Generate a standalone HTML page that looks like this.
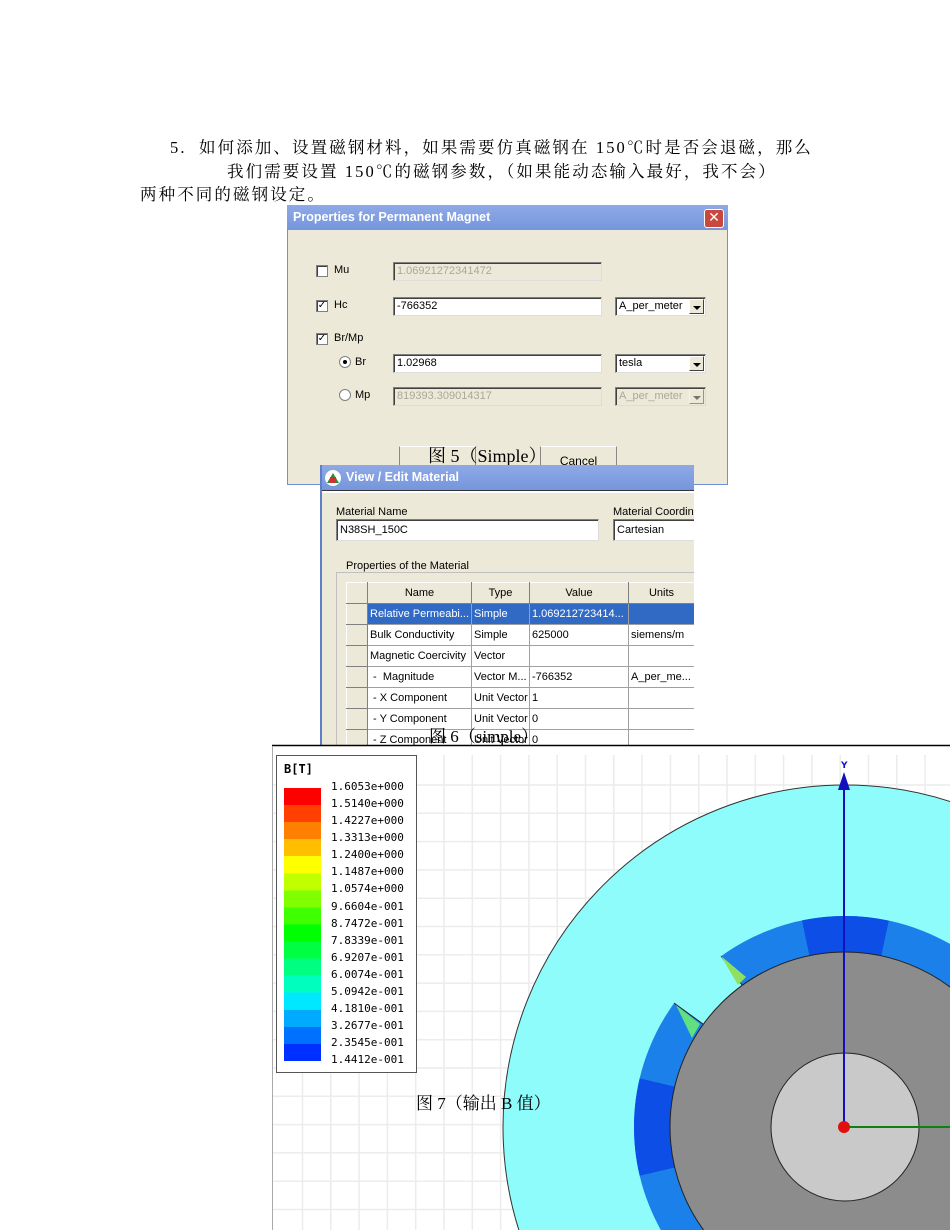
<!DOCTYPE html>
<html style="overflow:hidden"><head><meta charset="utf-8"><style>
*{margin:0;padding:0;box-sizing:border-box}
html,body{width:950px;height:1230px;overflow:hidden}
body{background:#fff;position:relative;font-family:"Liberation Serif","Noto Serif CJK SC",serif}
.a{position:absolute}
.t{font-size:16.5px;color:#000;white-space:nowrap;letter-spacing:2.1px}
.ui{font-family:"Liberation Sans","DejaVu Sans",sans-serif;font-size:11px;color:#000;white-space:nowrap}
.inp{position:absolute;background:#fff;border:1px solid #7f7f7f;border-right-color:#ddd;border-bottom-color:#ddd;box-shadow:inset 1px 1px 0 #404040;font-family:"Liberation Sans",sans-serif;font-size:11px;padding:2px 3px;line-height:13px;white-space:nowrap;overflow:hidden}
.dis{background:#ece9d8;color:#aca899}
.cb{position:absolute;width:12px;height:12px;background:#fff;border:1px solid #808080;box-shadow:inset 1px 1px 0 #404040;font-size:10px;line-height:10px;text-align:center;font-family:"DejaVu Sans",sans-serif;font-weight:bold}
.rd{position:absolute;width:12px;height:12px;border-radius:50%;background:#fff;border:1px solid #808080}
.dd{position:absolute;right:1px;top:1px;width:15px;bottom:1px;background:#ece9d8;border:1px solid #fff;border-right-color:#404040;border-bottom-color:#404040}
.dd:after{content:"";position:absolute;left:3px;top:6px;border-left:4px solid transparent;border-right:4px solid transparent;border-top:4px solid #000}
.tb{position:absolute;left:0;right:0;top:0;height:25px;background:linear-gradient(#8fa9e6,#7596dc);color:#fff;font-family:"Liberation Sans",sans-serif;font-weight:bold;font-size:12.5px;line-height:25px;padding-left:6px}
table{border-collapse:collapse;position:absolute;table-layout:fixed}
td{border:1px solid #a0a0a0;height:21px;font-family:"Liberation Sans",sans-serif;font-size:11px;padding:0 2px;white-space:nowrap;overflow:hidden;background:#fff}
td.h{background:#ece9d8;text-align:center;border-color:#fff #808080 #808080 #fff}
td.r{background:#ece9d8;border-color:#fff #808080 #808080 #fff}
.lg{font-family:"DejaVu Sans Mono","Liberation Mono",monospace;font-size:11px;position:absolute;left:331px}
</style></head><body>

<div class="a t" style="left:170px;top:134px">5.&nbsp; 如何添加、设置磁钢材料，如果需要仿真磁钢在 150℃时是否会退磁，那么</div>
<div class="a t" style="left:227px;top:158px">我们需要设置 150℃的磁钢参数，（如果能动态输入最好，我不会）</div>
<div class="a t" style="left:140px;top:181px">两种不同的磁钢设定。</div>

<!-- Dialog 1 -->
<div class="a" style="left:287px;top:205px;width:441px;height:280px;background:#ece9d8;border:1px solid #6f8fd6;border-top:none">
 <div class="tb" style="left:-1px;right:-1px">Properties for Permanent Magnet</div>
 <div class="a" style="right:3px;top:4px;width:20px;height:19px;background:#c9483b;border:1px solid #fff;border-radius:3px;color:#fff;font:bold 14px 'DejaVu Sans';text-align:center;line-height:17px">✕</div>
 <div class="cb" style="left:28px;top:60px"></div><div class="a ui" style="left:46px;top:59px">Mu</div>
 <div class="inp dis" style="left:105px;top:57px;width:209px;height:19px">1.06921272341472</div>
 <div class="cb" style="left:28px;top:95px">✓</div><div class="a ui" style="left:46px;top:94px">Hc</div>
 <div class="inp" style="left:105px;top:92px;width:209px;height:19px">-766352</div>
 <div class="inp" style="left:327px;top:92px;width:91px;height:19px">A_per_meter<div class="dd"></div></div>
 <div class="cb" style="left:28px;top:128px">✓</div><div class="a ui" style="left:46px;top:127px">Br/Mp</div>
 <div class="rd" style="left:51px;top:151px"><div class="a" style="left:3px;top:3px;width:4px;height:4px;background:#000;border-radius:50%"></div></div><div class="a ui" style="left:67px;top:151px">Br</div>
 <div class="inp" style="left:105px;top:149px;width:209px;height:19px">1.02968</div>
 <div class="inp" style="left:327px;top:149px;width:91px;height:19px">tesla<div class="dd"></div></div>
 <div class="rd" style="left:51px;top:184px"></div><div class="a ui" style="left:67px;top:184px">Mp</div>
 <div class="inp dis" style="left:105px;top:182px;width:209px;height:19px">819393.309014317</div>
 <div class="inp dis" style="left:327px;top:182px;width:91px;height:19px">A_per_meter<div class="dd" style="opacity:.5"></div></div>
 <div class="a" style="left:111px;top:241px;width:77px;height:30px;border:1px solid #888;border-top-color:#fff;background:#ece9d8"></div>
 <div class="a" style="left:252px;top:241px;width:77px;height:30px;border:1px solid #888;border-top-color:#fff;background:#ece9d8"><div class="ui" style="text-align:center;margin-top:7px;font-size:12px">Cancel</div></div>
 <div class="a" style="left:188px;top:241px;width:64px;height:30px;background:#ece9d8"></div>
</div>
<div class="a t" style="left:428px;top:442px;font-size:18px;letter-spacing:0">图 5（Simple）</div>

<!-- Dialog 2 -->
<div class="a" style="left:320px;top:465px;width:374px;height:281px;background:#ece9d8;border-left:2px solid #5f7fc6;overflow:hidden">
 <div class="tb" style="padding-left:24px">View / Edit Material</div>
 <div class="a" style="left:3px;top:5px;width:16px;height:16px;border-radius:50%;background:#fff"><div class="a" style="left:2px;top:3px;border-left:6px solid transparent;border-right:6px solid transparent;border-bottom:10px solid #2a8a3a"></div><div class="a" style="left:5px;top:7px;width:6px;height:6px;background:#c33"></div></div>
 <div class="a" style="left:0;top:25px;width:374px;height:3px;background:#fff;border-top:1px solid #333"></div>
 <div class="a ui" style="left:14px;top:41px">Material Name</div>
 <div class="inp" style="left:14px;top:54px;width:263px;height:22px;padding-top:4px">N38SH_150C</div>
 <div class="a ui" style="left:291px;top:41px">Material Coordina</div>
 <div class="inp" style="left:291px;top:54px;width:90px;height:22px;padding-top:4px">Cartesian</div>
 <div class="a" style="left:14px;top:107px;width:380px;height:200px;border:1px solid #c0c0c0;border-right:none"></div>
 <div class="a ui" style="left:22px;top:95px;background:#ece9d8;padding:0 2px">Properties of the Material</div>
 <table style="left:24px;top:117px;width:348px">
  <tr><td class="r" style="width:21px"></td><td class="h" style="width:104px">Name</td><td class="h" style="width:58px">Type</td><td class="h" style="width:99px">Value</td><td class="h" style="width:66px">Units</td></tr>
  <tr><td class="r"></td><td style="background:#316ac5;color:#fff">Relative Permeabi...</td><td style="background:#316ac5;color:#fff">Simple</td><td style="background:#316ac5;color:#fff">1.069212723414...</td><td style="background:#316ac5"></td></tr>
  <tr><td class="r"></td><td>Bulk Conductivity</td><td>Simple</td><td>625000</td><td>siemens/m</td></tr>
  <tr><td class="r"></td><td>Magnetic Coercivity</td><td>Vector</td><td></td><td></td></tr>
  <tr><td class="r"></td><td>&nbsp;-&nbsp; Magnitude</td><td>Vector M...</td><td>-766352</td><td>A_per_me...</td></tr>
  <tr><td class="r"></td><td>&nbsp;- X Component</td><td>Unit Vector</td><td>1</td><td></td></tr>
  <tr><td class="r"></td><td>&nbsp;- Y Component</td><td>Unit Vector</td><td>0</td><td></td></tr>
  <tr><td class="r"></td><td>&nbsp;- Z Component</td><td>Unit Vector</td><td>0</td><td></td></tr>
 </table>
</div>
<div class="a t" style="left:429px;top:722px;font-size:17px;letter-spacing:0">图 6（simple）</div>

<!-- Figure 7 -->
<svg class="a" style="left:0;top:0" width="950" height="1230" viewBox="0 0 950 1230">
 <line x1="272" y1="745.5" x2="950" y2="745.5" stroke="#000" stroke-width="1.5"/>
 <g stroke="#ececec" stroke-width="1.5">
  <line x1="302.5" y1="755" x2="302.5" y2="1230"/><line x1="330.8" y1="755" x2="330.8" y2="1230"/><line x1="359.1" y1="755" x2="359.1" y2="1230"/><line x1="387.4" y1="755" x2="387.4" y2="1230"/><line x1="415.7" y1="755" x2="415.7" y2="1230"/><line x1="444" y1="755" x2="444" y2="1230"/><line x1="472.3" y1="755" x2="472.3" y2="1230"/><line x1="500.6" y1="755" x2="500.6" y2="1230"/><line x1="528.9" y1="755" x2="528.9" y2="1230"/><line x1="557.2" y1="755" x2="557.2" y2="1230"/><line x1="585.5" y1="755" x2="585.5" y2="1230"/><line x1="613.8" y1="755" x2="613.8" y2="1230"/><line x1="642.1" y1="755" x2="642.1" y2="1230"/><line x1="670.4" y1="755" x2="670.4" y2="1230"/><line x1="698.7" y1="755" x2="698.7" y2="1230"/><line x1="727" y1="755" x2="727" y2="1230"/><line x1="755.3" y1="755" x2="755.3" y2="1230"/><line x1="783.6" y1="755" x2="783.6" y2="1230"/><line x1="811.9" y1="755" x2="811.9" y2="1230"/><line x1="840.2" y1="755" x2="840.2" y2="1230"/><line x1="868.5" y1="755" x2="868.5" y2="1230"/><line x1="896.8" y1="755" x2="896.8" y2="1230"/><line x1="925.1" y1="755" x2="925.1" y2="1230"/>
  <line x1="272" y1="785" x2="950" y2="785"/><line x1="272" y1="813.3" x2="950" y2="813.3"/><line x1="272" y1="841.6" x2="950" y2="841.6"/><line x1="272" y1="869.9" x2="950" y2="869.9"/><line x1="272" y1="898.2" x2="950" y2="898.2"/><line x1="272" y1="926.5" x2="950" y2="926.5"/><line x1="272" y1="954.8" x2="950" y2="954.8"/><line x1="272" y1="983.1" x2="950" y2="983.1"/><line x1="272" y1="1011.4" x2="950" y2="1011.4"/><line x1="272" y1="1039.7" x2="950" y2="1039.7"/><line x1="272" y1="1068" x2="950" y2="1068"/><line x1="272" y1="1096.3" x2="950" y2="1096.3"/><line x1="272" y1="1124.6" x2="950" y2="1124.6"/><line x1="272" y1="1152.9" x2="950" y2="1152.9"/><line x1="272" y1="1181.2" x2="950" y2="1181.2"/><line x1="272" y1="1209.5" x2="950" y2="1209.5"/>
 </g>
 <line x1="272.5" y1="746" x2="272.5" y2="1230" stroke="#aaa"/>
 <circle cx="845" cy="1127" r="342" fill="#8ffcfc" stroke="#333" stroke-width="1"/>
 <circle cx="845" cy="1127" r="193" fill="none" stroke="#1c80ea" stroke-width="36"/>
 <circle cx="845" cy="1127" r="193" fill="none" stroke="#0c4ee6" stroke-width="36" stroke-dasharray="80 1132.6" stroke-dashoffset="-869.5"/>
 <circle cx="845" cy="1127" r="193" fill="none" stroke="#0c4ee6" stroke-width="36" stroke-dasharray="90 1122.6" stroke-dashoffset="-561"/>
 <circle cx="845" cy="1127" r="200" fill="none" stroke="#0030e0" stroke-width="16" stroke-dasharray="40 1216" stroke-dashoffset="-1236"/>
 <path d="M845 1127 L710 941 L659 992 Z" fill="#8ffcfc"/>
 <path d="M721 956 L742 985 M674 1003 L703 1024" stroke="#222" stroke-width="1"/>
 <path d="M721 956 L738 985 L746 977 Z" fill="#8fe060"/>
 <path d="M676 1005 L692 1038 L700 1024 Z" fill="#60e080"/>
 <circle cx="845" cy="1127" r="175" fill="#8c8c8c" stroke="#222"/>
 <circle cx="845" cy="1127" r="74" fill="#c9c9c9" stroke="#222"/>
 <line x1="844" y1="1127" x2="844" y2="785" stroke="#1010c0" stroke-width="2"/>
 <path d="M838 790 L844 772 L850 790 Z" fill="#1010c0"/>
 <text x="841" y="768" font-family="DejaVu Sans" font-size="9" fill="#1010c0" font-weight="bold">Y</text>
 <line x1="844" y1="1127" x2="950" y2="1127" stroke="#108010" stroke-width="2"/>
 <circle cx="844" cy="1127" r="6" fill="#e01010"/>
</svg>

<!-- legend -->
<div class="a" style="left:276px;top:755px;width:141px;height:318px;background:#fff;border:1px solid #555"></div>
<div class="a" style="left:284px;top:762px;font:bold 12px 'DejaVu Sans Mono',monospace">B[T]</div>
<div class="a" style="left:284px;top:788px;width:37px;height:273px;background:linear-gradient(#f00 0,#f00 6.25%,#ff4000 6.25%,#ff4000 12.5%,#ff8000 12.5%,#ff8000 18.75%,#ffbf00 18.75%,#ffbf00 25%,#ffff00 25%,#ffff00 31.25%,#bfff00 31.25%,#bfff00 37.5%,#80ff00 37.5%,#80ff00 43.75%,#40ff00 43.75%,#40ff00 50%,#00ff00 50%,#00ff00 56.25%,#00ff40 56.25%,#00ff40 62.5%,#00ff80 62.5%,#00ff80 68.75%,#00ffbf 68.75%,#00ffbf 75%,#00e8ff 75%,#00e8ff 81.25%,#00aaff 81.25%,#00aaff 87.5%,#0070ff 87.5%,#0070ff 93.75%,#0030ff 93.75%)"></div>
<div class="lg" style="top:780px">1.6053e+000</div><div class="lg" style="top:797px">1.5140e+000</div><div class="lg" style="top:814px">1.4227e+000</div><div class="lg" style="top:831px">1.3313e+000</div><div class="lg" style="top:848px">1.2400e+000</div><div class="lg" style="top:865px">1.1487e+000</div><div class="lg" style="top:882px">1.0574e+000</div><div class="lg" style="top:900px">9.6604e-001</div><div class="lg" style="top:917px">8.7472e-001</div><div class="lg" style="top:934px">7.8339e-001</div><div class="lg" style="top:951px">6.9207e-001</div><div class="lg" style="top:968px">6.0074e-001</div><div class="lg" style="top:985px">5.0942e-001</div><div class="lg" style="top:1002px">4.1810e-001</div><div class="lg" style="top:1019px">3.2677e-001</div><div class="lg" style="top:1036px">2.3545e-001</div><div class="lg" style="top:1053px">1.4412e-001</div>
<div class="a t" style="left:416px;top:1089px;font-size:17px;letter-spacing:0">图 7（输出 B 值）</div>
</body></html>
